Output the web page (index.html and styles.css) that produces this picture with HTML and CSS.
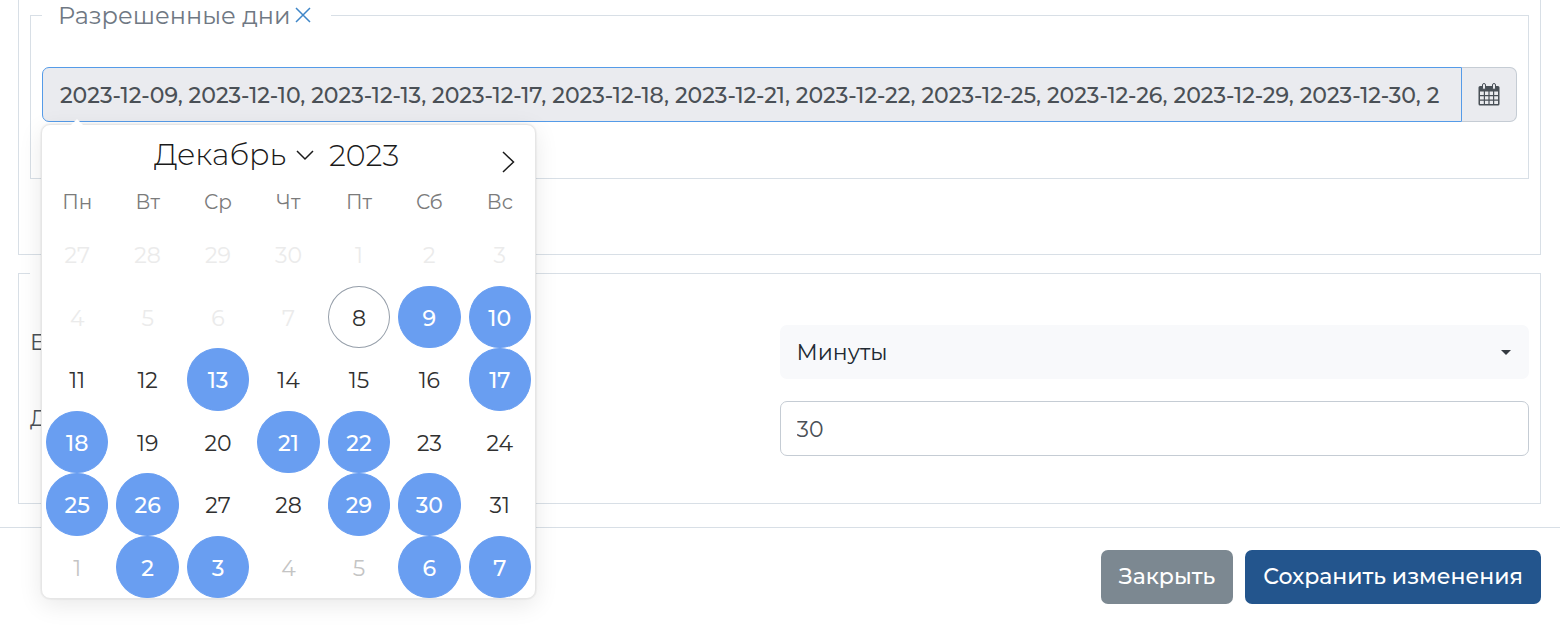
FILE: index.html
```
<!DOCTYPE html>
<html lang="ru">
<head>
<meta charset="utf-8">
<title>Разрешенные дни</title>
<link rel="stylesheet" href="styles.css">
</head>
<body>
<form class="modal-form">
  <div class="panel panel-open">
    <fieldset class="group group-days">
      <legend class="group-title">Разрешенные дни<button type="button" class="remove" aria-label="Удалить"><svg viewBox="0 0 16 16" width="16" height="16"><path d="M1 1 15 15M15 1 1 15"/></svg></button></legend>
      <div class="date-group">
        <input class="date-input" type="text" readonly aria-label="Разрешенные дни" value="2023-12-09, 2023-12-10, 2023-12-13, 2023-12-17, 2023-12-18, 2023-12-21, 2023-12-22, 2023-12-25, 2023-12-26, 2023-12-29, 2023-12-30, 2">
        <button type="button" class="date-toggle" aria-label="Календарь"><svg viewBox="0 0 22 24" width="22" height="24"><path class="cal-body" fill-rule="evenodd" d="M2 4H20Q21.500 4 21.500 5.500V22Q21.500 23.500 20 23.500H2Q.5 23.500.5 22V5.500Q.5 4 2 4ZM2 9.500V13H5.800V9.500ZM7 9.500V13H10.400V9.500ZM11.600 9.500V13H15V9.500ZM16.200 9.500V13H20V9.500ZM2 14.200V17.500H5.800V14.200ZM7 14.200V17.500H10.400V14.200ZM11.600 14.200V17.500H15V14.200ZM16.200 14.200V17.500H20V14.200ZM2 18.700V22H5.800V18.700ZM7 18.700V22H10.400V18.700ZM11.600 18.700V22H15V18.700ZM16.200 18.700V22H20V18.700Z"/><rect class="cal-ring" x="4.500" y="1.500" width="3" height="6" rx="1.500"/><rect class="cal-ring" x="14.500" y="1.500" width="3" height="6" rx="1.500"/></svg></button>
        <div class="calendar">
          <div class="calendar-head">
            <div class="month">
              <select class="month-select" aria-label="Месяц"><option>Декабрь</option></select>
              <svg class="month-arrow" viewBox="0 0 18 12" width="18" height="12"><path d="M1 2 9 10 17 2"/></svg>
            </div>
            <input class="year" type="text" aria-label="Год" value="2023">
            <button type="button" class="next" aria-label="Следующий месяц"><svg viewBox="0 0 14 22" width="14" height="22"><path d="M2 1 12.500 11 2 21"/></svg></button>
          </div>
          <div class="weekdays"><span>Пн</span><span>Вт</span><span>Ср</span><span>Чт</span><span>Пт</span><span>Сб</span><span>Вс</span></div>
          <div class="days">
            <button type="button" class="day off" disabled>27</button><button type="button" class="day off" disabled>28</button><button type="button" class="day off" disabled>29</button><button type="button" class="day off" disabled>30</button><button type="button" class="day off" disabled>1</button><button type="button" class="day off" disabled>2</button><button type="button" class="day off" disabled>3</button>
            <button type="button" class="day off" disabled>4</button><button type="button" class="day off" disabled>5</button><button type="button" class="day off" disabled>6</button><button type="button" class="day off" disabled>7</button><button type="button" class="day today">8</button><button type="button" class="day on">9</button><button type="button" class="day on">10</button>
            <button type="button" class="day">11</button><button type="button" class="day">12</button><button type="button" class="day on">13</button><button type="button" class="day">14</button><button type="button" class="day">15</button><button type="button" class="day">16</button><button type="button" class="day on">17</button>
            <button type="button" class="day on">18</button><button type="button" class="day">19</button><button type="button" class="day">20</button><button type="button" class="day on">21</button><button type="button" class="day on">22</button><button type="button" class="day">23</button><button type="button" class="day">24</button>
            <button type="button" class="day on">25</button><button type="button" class="day on">26</button><button type="button" class="day">27</button><button type="button" class="day">28</button><button type="button" class="day on">29</button><button type="button" class="day on">30</button><button type="button" class="day">31</button>
            <button type="button" class="day next-month">1</button><button type="button" class="day on">2</button><button type="button" class="day on">3</button><button type="button" class="day next-month">4</button><button type="button" class="day next-month">5</button><button type="button" class="day on">6</button><button type="button" class="day on">7</button>
          </div>
        </div>
      </div>
    </fieldset>
  </div>
  <fieldset class="group panel">
    <legend class="group-title" aria-label="Интервал"></legend>
    <div class="fields">
      <label class="field-label" for="unit">Ед.</label>
      <div class="select-wrap">
        <select class="unit" id="unit"><option>Минуты</option></select>
        <svg class="caret" viewBox="0 0 10 5" width="10" height="5"><path d="M0 0H10L5 5Z"/></svg>
      </div>
      <label class="field-label" for="length">Дл.</label>
      <input class="length" id="length" type="text" value="30">
    </div>
  </fieldset>
  <div class="actions">
    <button type="button" class="btn btn-close">Закрыть</button>
    <button type="submit" class="btn btn-save">Сохранить изменения</button>
  </div>
</form>
</body>
</html>
```
FILE: styles.css
```
* { box-sizing: border-box; }
body {
  margin: 0;
  background: #fff;
  color: #4a5056;
  font-family: Montserrat, Inter, "Noto Sans", sans-serif;
  font-size: 22px;
  line-height: 30px;
  overflow-x: hidden;
}
button, input, select { font: inherit; color: inherit; margin: 0; }
svg { display: block; }
.panel {
  margin: 0 19px 0 18px;
  border: 1px solid #d8dfe6;
}
.panel-open {
  border-top: 0;
  padding: 0 11px 75px;
}
.group {
  min-width: 0;
  padding: 0 11px;
}
.group-days {
  margin: 0;
  border: 1px solid #d8dfe6;
  padding: 37px 11px 56px;
}
.group.panel { margin-top: 3px; }
.group-title {
  display: flex;
  align-items: center;
  height: 30px;
  padding: 2px 17px 0 16px;
  color: #6f7883;
  font-size: 24px;
}
.remove {
  margin: 0 3px 2px 4px;
  padding: 0;
  border: 0;
  background: none;
}
.remove path { fill: none; stroke: #3f86c8; stroke-width: 1.5; }
.date-group {
  position: relative;
  display: flex;
  height: 55px;
}
.date-input {
  flex: 1;
  min-width: 0;
  padding: 2px 12px 0 17px;
  border: 1px solid #559be8;
  border-radius: 7px 0 0 7px;
  background: #eaebef;
  font-weight: 500;
  outline: 0;
}
.date-toggle {
  display: flex;
  align-items: center;
  justify-content: center;
  width: 55px;
  padding: 0 1px 2px 0;
  border: 1px solid #c5ccd4;
  border-left: 0;
  border-radius: 0 7px 7px 0;
  background: #eaebef;
}
.cal-body { fill: #495057; }
.cal-ring { fill: #eaebef; stroke: #495057; }
.calendar {
  position: absolute;
  z-index: 2;
  top: 57px;
  left: -1px;
  width: 495px;
  border: 1px solid #e6e6e6;
  border-radius: 9px;
  background: #fff;
  box-shadow: 0 0 1px 1px rgba(0, 0, 0, .04), 0 6px 24px rgba(0, 0, 0, .09);
}
.calendar::before {
  content: "";
  position: absolute;
  top: -6px;
  left: 29px;
  border: 6px solid transparent;
  border-top: 0;
  border-bottom-color: #fff;
}
.calendar-head {
  display: flex;
  align-items: center;
  height: 62px;
  padding: 0 20px 2px 112px;
  color: #1a1a1a;
  font-size: 30px;
  font-weight: 300;
}
.month { display: grid; align-items: center; width: 161px; }
.month-select {
  grid-area: 1 / 1;
  appearance: none;
  padding: 0;
  border: 0;
  background: none;
}
.month-arrow { grid-area: 1 / 1; justify-self: end; margin-right: 1px; }
.month-arrow path, .next path { fill: none; stroke: #1a1a1a; stroke-width: 1.5; }
.year {
  width: 90px;
  margin-left: 14px;
  padding: 0;
  border: 0;
  background: none;
}
.next {
  margin: 14px 0 0 auto;
  padding: 0;
  border: 0;
  background: none;
}
.weekdays {
  display: grid;
  grid-template-columns: repeat(7, 1fr);
  height: 36px;
  color: #7b7b7b;
  font-size: 20px;
  text-align: center;
}
.days {
  display: grid;
  grid-template-columns: repeat(7, 1fr);
  grid-template-rows: repeat(6, 1fr);
  height: 375px;
}
.day {
  margin: 0 4px;
  padding: 4px 0 0;
  border: 1px solid transparent;
  border-radius: 50%;
  background: none;
  color: #303030;
  line-height: 30px;
}
.day.off { color: #ebebeb; }
.day.next-month { color: #c4c4c4; }
.day.today { border-color: #959ea9; }
.day.on { border-color: #699ef1; background: #699ef1; color: #fff; font-weight: 500; }
.fields {
  display: grid;
  grid-template-columns: 1fr 1fr;
  row-gap: 22px;
  padding: 37px 0 47px;
}
.field-label { padding-top: 3px; }
.select-wrap { display: grid; align-items: center; }
.unit {
  grid-area: 1 / 1;
  appearance: none;
  height: 54px;
  padding: 2px 18px 0 17px;
  border: 0;
  border-radius: 7px;
  background: #f8f9fb;
  color: #212a33;
}
.caret { grid-area: 1 / 1; justify-self: end; margin-right: 18px; fill: #343a40; }
.length {
  width: 100%;
  height: 55px;
  padding: 2px 17px 0 16px;
  border: 1px solid #c5ccd4;
  border-radius: 7px;
  background: #fff;
}
.actions {
  display: flex;
  justify-content: flex-end;
  gap: 12px;
  margin-top: 23px;
  padding: 22px 19px 26px;
  border-top: 1px solid #d8dfe6;
}
.btn {
  height: 54px;
  padding: 0 18px;
  border: 0;
  border-radius: 7px;
  color: #fff;
  font-weight: 500;
}
.btn-close { background: #7c8891; }
.btn-save { background: #23558d; }
```
